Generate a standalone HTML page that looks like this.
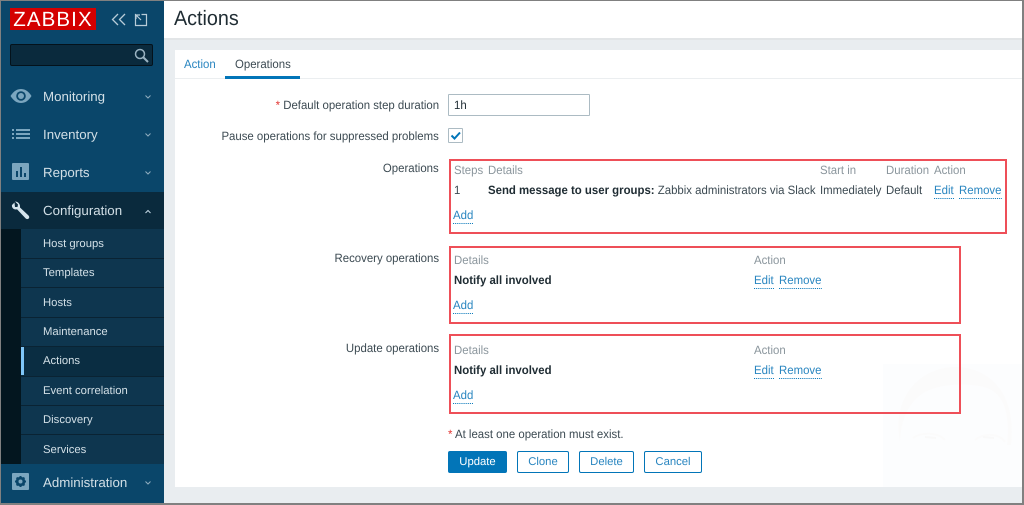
<!DOCTYPE html>
<html><head><meta charset="utf-8"><style>
html,body{margin:0;padding:0;width:1024px;height:505px;overflow:hidden;background:#fff;font-family:"Liberation Sans",Arial,sans-serif}
#r{position:relative;width:1024px;height:505px;overflow:hidden;filter:blur(.3px);text-rendering:geometricPrecision}
.a{position:absolute}
.t{position:absolute;white-space:nowrap;line-height:16px;font-size:12px;color:#3c4a52;transform:scaleX(.95);transform-origin:0 0;margin-top:.4px}
.l{text-align:right;right:585px;transform-origin:100% 0}
.h{color:#8b969d}
.b{font-weight:bold;color:#1f2c33}
.k{color:#2a86c0;border-bottom:1px dotted #0275b8;line-height:14px;height:15px}
.m{position:absolute;left:43px;font-size:13.3px;color:#d2dfe6;line-height:18px;white-space:nowrap}
.s{position:absolute;left:43px;font-size:11.3px;color:#d2dfe6;line-height:14px;white-space:nowrap}
.sep{position:absolute;left:21px;width:143px;height:1px;background:#0a2333}
.red{position:absolute;border:2px solid #ee4f58;box-sizing:border-box}
.btn{position:absolute;top:451px;height:22px;box-sizing:border-box;border:1px solid #0275b8;border-radius:2px;color:#2a86c0;font-size:11.3px;line-height:20px;text-align:center;background:#fff}
.chev{position:absolute;left:144px}
</style></head><body><div id="r">
<!-- main -->
<div class="a" style="left:164px;top:39px;width:858px;height:464px;background:#e9edf0"></div>
<div class="a" style="left:164px;top:38px;width:858px;height:2px;background:#e2e5e7"></div>
<div class="a" style="left:175px;top:50px;width:847px;height:437px;background:#fff"></div>
<div class="a" style="left:175px;top:78px;width:847px;height:1px;background:#ebeef0"></div>
<div class="a" style="left:883px;top:364px;width:139px;height:123px;background:#fcfdfe"></div>
<svg class="a" style="left:883px;top:364px" width="139" height="123" viewBox="0 0 139 123"><path d="M17 78C8 30 40 3 72 3c34 0 62 26 56 78l-4 0c4-36-6-52-20-57-20-6-46-4-62 4-14 8-24 24-25 50z" fill="#fbfbfb"/><path d="M30 74c8-6 25-6 32 2M92 76c10-8 25-6 30 2" stroke="#fbfbfb" stroke-width="2" fill="none"/><path d="M42 73l11 1M100 73l11 1" stroke="#f9f9f9" stroke-width="2" fill="none"/></svg>
<div class="t" style="left:174px;top:7px;font-size:20.8px;line-height:24px;color:#1f2c33">Actions</div>
<!-- tabs -->
<div class="t" style="left:184px;top:56px;color:#2a86c0">Action</div>
<div class="t" style="left:234.500px;top:56px;color:#3c4a52">Operations</div>
<div class="a" style="left:225px;top:76px;width:75px;height:2.500px;background:#0275b8"></div>
<!-- form -->
<div class="t l" style="top:97px"><span style="color:#e33734">*</span> Default operation step duration</div>
<div class="a" style="left:448px;top:94px;width:142px;height:22px;box-sizing:border-box;border:1px solid #acbbc3;border-radius:1px;background:#fff"></div>
<div class="t" style="left:454px;top:97px;color:#1f2c33">1h</div>
<div class="t l" style="top:128px">Pause operations for suppressed problems</div>
<div class="a" style="left:448px;top:128px;width:15px;height:15px;box-sizing:border-box;border:1px solid #acbbc3;border-radius:1px"></div>
<svg class="a" style="left:448px;top:128px" width="15" height="15"><path d="M3.500 7.500l3 3 5.500-6" stroke="#0275b8" stroke-width="2" fill="none"/></svg>
<div class="t l" style="top:160px">Operations</div>
<div class="t l" style="top:250px">Recovery operations</div>
<div class="t l" style="top:340px">Update operations</div>
<!-- ops -->
<div class="red" style="left:449px;top:159px;width:558px;height:75px"></div>
<div class="t h" style="left:454px;top:162px">Steps</div>
<div class="t h" style="left:488px;top:162px">Details</div>
<div class="t h" style="left:819.500px;top:162px">Start in</div>
<div class="t h" style="left:885.500px;top:162px">Duration</div>
<div class="t h" style="left:934px;top:162px">Action</div>
<div class="t" style="left:454px;top:182px">1</div>
<div class="t" style="left:488px;top:182px"><span class="b">Send message to user groups:</span> Zabbix administrators via Slack</div>
<div class="t" style="left:819.500px;top:182px">Immediately</div>
<div class="t" style="left:885.500px;top:182px">Default</div>
<div class="t k" style="left:934px;top:183px">Edit</div>
<div class="t k" style="left:959px;top:183px">Remove</div>
<div class="t k" style="left:453px;top:208px">Add</div>
<!-- recovery -->
<div class="red" style="left:449px;top:246px;width:512px;height:78px"></div>
<div class="t h" style="left:454px;top:252px">Details</div>
<div class="t h" style="left:754px;top:252px">Action</div>
<div class="t b" style="left:454px;top:272px">Notify all involved</div>
<div class="t k" style="left:754px;top:273px">Edit</div>
<div class="t k" style="left:779px;top:273px">Remove</div>
<div class="t k" style="left:453px;top:298px">Add</div>
<!-- update -->
<div class="red" style="left:449px;top:334px;width:512px;height:80px"></div>
<div class="t h" style="left:454px;top:342px">Details</div>
<div class="t h" style="left:754px;top:342px">Action</div>
<div class="t b" style="left:454px;top:362px">Notify all involved</div>
<div class="t k" style="left:754px;top:363px">Edit</div>
<div class="t k" style="left:779px;top:363px">Remove</div>
<div class="t k" style="left:453px;top:388px">Add</div>
<div class="t" style="left:448px;top:426px"><span style="color:#e33734">*</span> At least one operation must exist.</div>
<div class="btn" style="left:448px;width:59px;background:#0275b8;color:#fff">Update</div>
<div class="btn" style="left:517px;width:52px">Clone</div>
<div class="btn" style="left:579px;width:55px">Delete</div>
<div class="btn" style="left:644px;width:58px">Cancel</div>
<!-- sidebar -->
<div class="a" style="left:1px;top:0;width:163px;height:505px;background:#0a466a"></div>
<div class="a" style="left:1px;top:192px;width:163px;height:37px;background:#0a2a3d"></div>
<div class="a" style="left:1px;top:229px;width:20px;height:235px;background:#03161f"></div>
<div class="a" style="left:21px;top:229px;width:143px;height:235px;background:#0e364f"></div>
<div class="a" style="left:21px;top:347px;width:143px;height:29px;background:#0a2d42"></div>
<div class="a" style="left:21px;top:347px;width:3px;height:28px;background:#7fc6f8"></div>
<div class="sep" style="top:258px"></div><div class="sep" style="top:287px"></div><div class="sep" style="top:317px"></div><div class="sep" style="top:346px"></div><div class="sep" style="top:376px"></div><div class="sep" style="top:405px"></div><div class="sep" style="top:434px"></div>
<!-- logo -->
<div class="a" style="left:10px;top:8px;width:86px;height:22px;background:#d40000;color:#fff;font-size:20.5px;line-height:23px;text-align:center;letter-spacing:1.100px">ZABBIX</div>
<svg class="a" style="left:110px;top:10px" width="40" height="20" fill="none" stroke="#b8ccd8" stroke-width="1.300"><path d="M8 4L2.500 9.500 8 15M15 4L9.500 9.500 15 15"/><path d="M26 4.500h-.5v11h11v-11h-5M26 5l5 5M26 5h4M26 5v4" stroke-width="1.200"/></svg>
<div class="a" style="left:10px;top:44px;width:143px;height:22px;box-sizing:border-box;border:1px solid #04121b;border-radius:2px;background:#0a2a3d"></div>
<svg class="a" style="left:133px;top:47px" width="16" height="16" fill="none" stroke="#9ab3c2" stroke-width="1.500"><circle cx="7" cy="7" r="4.500"/><path d="M10.500 10.500l4.500 4.500" stroke-width="2"/></svg>
<!-- icons -->
<svg class="a" style="left:10px;top:88px" width="22" height="16"><path d="M0.500 8C4 2.500 7.500 1 11 1s7 1.500 10.500 7C18 13.500 14.500 15 11 15S4 13.500 .5 8z" fill="#7ba6bf"/><circle cx="11" cy="8" r="4.800" fill="#0a466a"/><circle cx="11" cy="8" r="3" fill="#7ba6bf"/></svg>
<svg class="a" style="left:12px;top:128px" width="18" height="12" fill="#7ba6bf"><rect x="0" y="1" width="2" height="2"/><rect x="4" y="1" width="14" height="2"/><rect x="0" y="5" width="2" height="2"/><rect x="4" y="5" width="14" height="2"/><rect x="0" y="9" width="2" height="2"/><rect x="4" y="9" width="14" height="2"/></svg>
<svg class="a" style="left:12px;top:163px" width="18" height="18"><rect width="17" height="17" rx="1" fill="#7ba6bf"/><rect x="4" y="8" width="2" height="6" fill="#0a466a"/><rect x="8" y="4" width="2" height="10" fill="#0a466a"/><rect x="12" y="10" width="2" height="4" fill="#0a466a"/></svg>
<svg class="a" style="left:11px;top:201px" width="20" height="20"><path d="M3.500 1.500L1 4c-.5 2 1 4.500 4 4.500l1-.2 8.500 9c1 1 2.500 1 3.200.2.800-.8.700-2-.2-3L9 6.500C9.500 3 7 .5 4 .5L7 3.500 6.500 6H4z" fill="#d5e4ed"/></svg>
<svg class="a" style="left:12px;top:473px" width="18" height="18"><rect width="17" height="17" rx="1" fill="#7ba6bf"/><circle cx="8.500" cy="8.500" r="4.800" fill="#0a466a"/><path d="M8.500 3v11M3 8.500h11M4.600 4.600l7.800 7.800M12.400 4.600l-7.800 7.800" stroke="#0a466a" stroke-width="2"/><circle cx="8.500" cy="8.500" r="2" fill="#7ba6bf"/></svg>
<div class="m" style="top:88px">Monitoring</div>
<div class="m" style="top:126px">Inventory</div>
<div class="m" style="top:164px">Reports</div>
<div class="m" style="top:202px">Configuration</div>
<div class="m" style="top:474px">Administration</div>
<svg class="chev" style="top:94px" width="8" height="6" fill="none" stroke="#8fadbf" stroke-width="1"><path d="M1.500 1.500l2.500 2.500 2.500-2.500"/></svg>
<svg class="chev" style="top:132px" width="8" height="6" fill="none" stroke="#8fadbf" stroke-width="1"><path d="M1.500 1.500l2.500 2.500 2.500-2.500"/></svg>
<svg class="chev" style="top:170px" width="8" height="6" fill="none" stroke="#8fadbf" stroke-width="1"><path d="M1.500 1.500l2.500 2.500 2.500-2.500"/></svg>
<svg class="chev" style="top:209px" width="8" height="6" fill="none" stroke="#c5d9e5" stroke-width="1"><path d="M1.500 4l2.500-2.500 2.500 2.500"/></svg>
<svg class="chev" style="top:480px" width="8" height="6" fill="none" stroke="#8fadbf" stroke-width="1"><path d="M1.500 1.500l2.500 2.500 2.500-2.500"/></svg>
<div class="s" style="top:237px">Host groups</div>
<div class="s" style="top:266px">Templates</div>
<div class="s" style="top:296px">Hosts</div>
<div class="s" style="top:325px">Maintenance</div>
<div class="s" style="top:354px">Actions</div>
<div class="s" style="top:384px">Event correlation</div>
<div class="s" style="top:413px">Discovery</div>
<div class="s" style="top:443px">Services</div>
<!-- frame -->
<div class="a" style="left:0;top:0;width:1024px;height:1px;background:#808080"></div>
<div class="a" style="left:0;top:503px;width:1024px;height:2px;background:#808080"></div>
<div class="a" style="left:0;top:0;width:1px;height:505px;background:#808080"></div>
<div class="a" style="left:1022px;top:0;width:2px;height:505px;background:#808080"></div>
</div></body></html>
